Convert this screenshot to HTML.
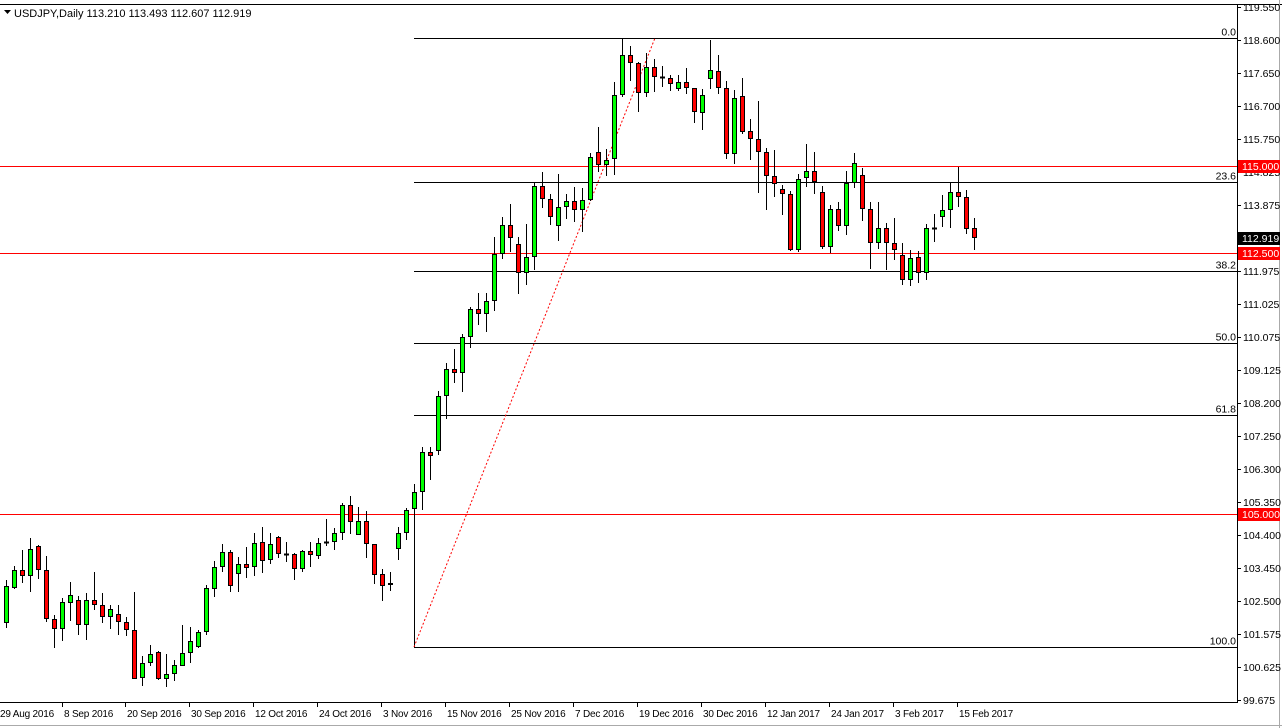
<!DOCTYPE html>
<html><head><meta charset="utf-8">
<style>
html,body{margin:0;padding:0;background:#fff;width:1282px;height:728px;overflow:hidden}
svg{display:block}
text{font-family:"Liberation Sans",sans-serif;font-size:11px;fill:#000}
text.d{font-size:10px;letter-spacing:-0.2px}
text.p{font-size:10.5px}
</style></head><body>
<svg id="s" width="1282" height="728" xmlns="http://www.w3.org/2000/svg">
<rect x="0" y="0" width="1282" height="728" fill="#fff"/>
<line x1="0" y1="4.5" x2="1282" y2="4.5" stroke="#000"/>
<line x1="0" y1="702.5" x2="1237" y2="702.5" stroke="#000"/>
<line x1="1237.5" y1="4" x2="1237.5" y2="703" stroke="#000"/>
<line x1="1279.5" y1="0" x2="1279.5" y2="728" stroke="#aaa"/>
<line x1="0" y1="725.5" x2="1282" y2="725.5" stroke="#aaa"/>
<path d="M4 10 L11 10 L7.5 14 Z" fill="#000"/>
<text x="14" y="17">USDJPY,Daily  113.210 113.493 112.607 112.919</text>
<g id="g"></g>
</svg>
<script>
var g=document.getElementById('g'),h='';
function L(x1,y1,x2,y2,c,w,d){h+='<line x1="'+x1+'" y1="'+y1+'" x2="'+x2+'" y2="'+y2+'" stroke="'+c+'" stroke-width="'+(w||1)+'"'+(d?' stroke-dasharray="'+d+'"':'')+'/>';}
function T(x,y,s,c,a,cl){h+='<text x="'+x+'" y="'+y+'"'+(cl?' class="'+cl+'"':'')+(c?' style="fill:'+c+'"':'')+(a?' text-anchor="'+a+'"':'')+'>'+s+'</text>';}
L(0,166.5,1237,166.5,'#f00');L(0,253.5,1237,253.5,'#f00');L(0,514.5,1237,514.5,'#f00');
var fib=[[38.5,'0.0'],[182.5,'23.6'],[271.5,'38.2'],[343.5,'50.0'],[415.5,'61.8'],[647.5,'100.0']];
fib.forEach(function(f){L(414,f[0],1237,f[0],'#000');T(1236,f[0]-3,f[1],'#000','end','p');});
L(414.5,510,414.5,648,'#000');
L(414,647,655,38,'#f00',1,'2,2');
var A=[[270,289,400,415,1],[228,240,293,298,1],[180,241,259,278,0],[145,178,259,305,1],[165,169,241,268,0],[198,241,388,395,0],[376,388,418,473,0],[323,337,418,452,1],[276,316,340,392,1],[318,331,406,434,0],[309,331,406,449,1],[246,331,346,361,0],[309,346,382,398,0],[346,357,382,416,1],[346,373,397,434,0],[381,397,421,437,0],[306,421,566,568,0],[498,520,565,587,1],[465,493,520,527,1],[484,487,566,571,0],[491,553,568,590,1],[511,526,553,572,1],[405,490,529,529,1],[411,454,490,520,1],[421,427,472,475,1],[285,295,427,434,1],[212,232,298,320,1],[162,187,232,247,1],[180,187,289,305,0],[201,223,253,305,1],[171,223,235,265,0],[129,160,232,257,1],[111,157,214,250,0],[130,163,211,221,1],[139,142,193,203,0],[156,192,193,215,1],[190,193,238,269,0],[180,184,238,247,1],[155,184,196,232,0],[145,160,199,208,1],[87,157,160,167,1],[115,130,157,180,1],[40,46,130,149,1],[17,46,97,131,0],[51,94,136,136,1],[63,94,163,204,0],[163,163,254,283,0],[238,253,287,332,0],[247,280,286,302,1],[112,130,178,210,1],[55,61,130,149,1]];
var B=[[1362,1387,1438,1440,1],[1250,1267,1387,1440,1],[1250,1267,1279,1350,0],[1083,1099,1262,1275,1],[998,1018,1099,1166,1],[957,1018,1030,1058,0],[912,922,1030,1085,1],[831,838,922,953,1],[789,838,851,884,0],[789,814,851,905,1],[621,672,814,842,1],[561,586,672,686,1],[521,586,625,665,0],[621,643,730,791,0],[581,682,730,765,1],[459,469,682,719,1],[426,469,508,533,0],[492,508,562,584,0],[432,532,589,632,1],[492,514,532,567,1],[471,514,541,575,0],[474,511,541,605,1],[369,382,511,514,1],[291,367,406,425,0],[357,391,406,437,1],[155,196,388,434,1],[25,76,196,200,1],[48,76,100,152,0],[95,100,190,247,0],[70,112,190,202,1],[87,112,142,187,0],[109,142,145,172,1],[136,145,163,182,0],[136,157,178,182,1],[115,157,175,193,0],[175,175,247,280,0],[178,196,250,301,1],[30,121,148,176,1],[75,124,175,193,0],
[153,175,373,386,0],[181,205,373,401,1],[145,199,305,311,0],[268,304,328,389,0],[213,328,367,488,0],[354,367,439,539,0],[360,439,463,500,0],[466,478,493,554,0],[484,493,659,662,0],[433,448,659,665,1],[343,424,445,472,1],[366,424,455,491,0],[469,487,650,656,0],[526,538,650,668,1],[515,538,589,604,0],[424,460,589,614,1],[370,400,460,473,1],[415,436,538,572,0],[517,538,640,716,0],[517,595,640,656,1],[580,595,640,719,0],[565,640,661,691,0],[640,676,751,764,0],[661,685,751,767,1],[664,682,730,760,0],[583,595,730,751,1],[553,595,596,635,1],[496,541,562,592,1],[457,487,541,593,1],[410,487,502,530,0],[481,502,598,611,0],[565,595,625,659,0]];
function C(k,d,off){var x=6+8*k,y=function(v){return Math.round(off+v/3);};
var hi=y(d[0]),t=y(d[1]),b=y(d[2]),lo=y(d[3]);
L(x+0.5,hi,x+0.5,lo,'#000');
if(b-t<2){L(x-2,t+0.5,x+3,t+0.5,'#000',2);return;}
h+='<rect x="'+(x-1.5)+'" y="'+(t+0.5)+'" width="4" height="'+(b-t-1)+'" fill="'+(d[4]?'#0f0':'#f00')+'" stroke="#000" stroke-width="1"/>';}
A.forEach(function(d,i){C(i,d,490);});
B.forEach(function(d,i){C(i+51,d,30);});
var P=[['119.550',7],['118.600',40],['117.650',73],['116.700',106],['115.750',139],['114.825',172],['113.875',205],['111.975',271],['111.025',304],['110.075',337],['109.125',370],['108.200',403],['107.250',436],['106.300',469],['105.350',502],['104.400',535],['103.450',568],['102.500',601],['101.575',634],['100.625',667],['99.675',700]];
P.forEach(function(p){L(1238,p[1]+0.5,1241,p[1]+0.5,'#000');T(1243,p[1]+4,p[0],null,null,'p');});
function Box(y,s,c){h+='<rect x="1238" y="'+(y-6)+'" width="42" height="13" fill="'+c+'"/>';T(1242,y+4,s,'#fff',null,'p');}
Box(166,'115.000','#f00');Box(238,'112.919','#000');Box(253,'112.500','#f00');Box(514,'105.000','#f00');
var D=[['29 Aug 2016',-2],['8 Sep 2016',62],['20 Sep 2016',125],['30 Sep 2016',189],['12 Oct 2016',253],['24 Oct 2016',317],['3 Nov 2016',381],['15 Nov 2016',445],['25 Nov 2016',509],['7 Dec 2016',573],['19 Dec 2016',637],['30 Dec 2016',701],['12 Jan 2017',765],['24 Jan 2017',829],['3 Feb 2017',893],['15 Feb 2017',957]];
D.forEach(function(d){if(d[1]>0)L(d[1]+0.5,703,d[1]+0.5,707,'#000');T(d[1]+2,717,d[0],null,null,'d');});
g.innerHTML=h;
</script>
</body></html>
